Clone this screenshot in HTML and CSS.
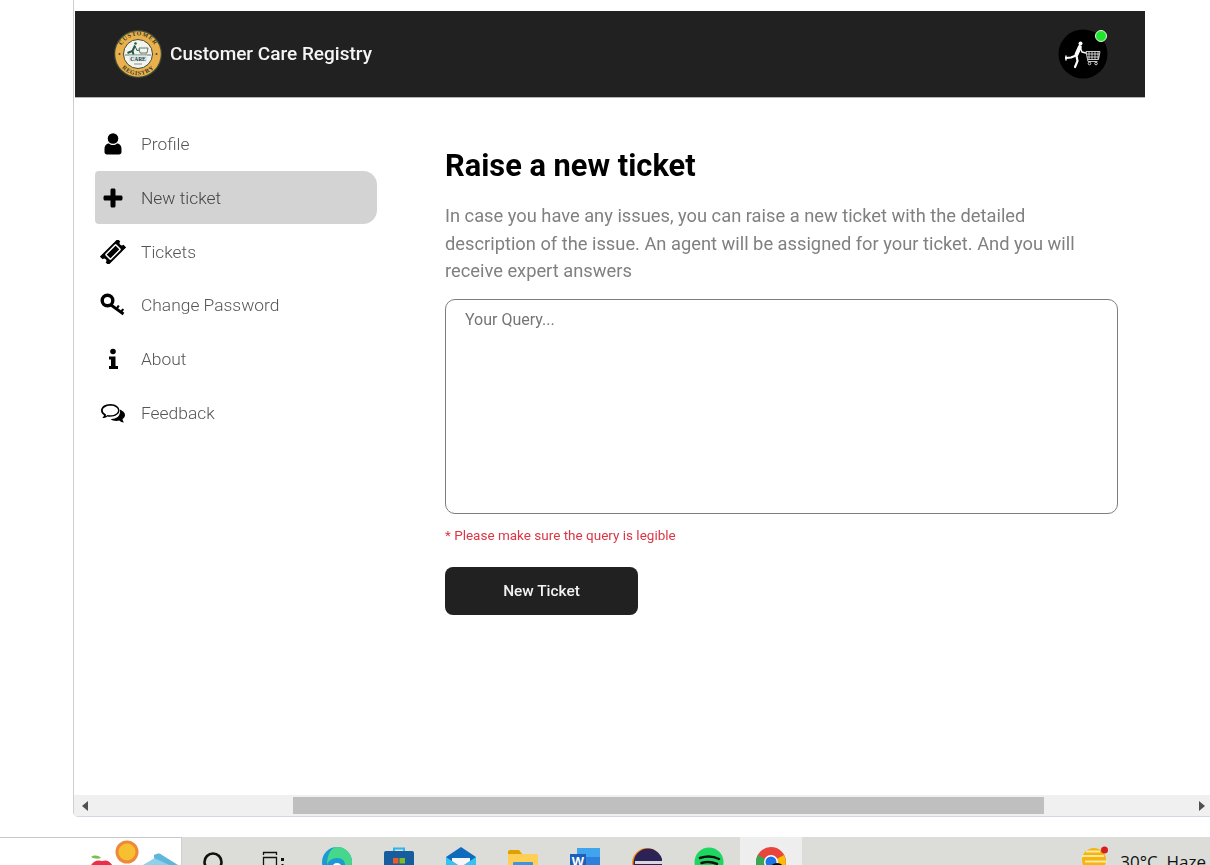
FILE: index.html
```html
<!DOCTYPE html>
<html lang="en">
<head>
<meta charset="utf-8">
<title>Customer Care Registry</title>
<link rel="stylesheet" href="styles.css">
</head>
<body>
<div class="desktop">
  <div class="window">
    <div class="page">
      <header class="topbar">
        <div class="brand">
          <svg class="logo" viewBox="0 0 48 48">
            <defs>
              <path id="arcTop" d="M5.500 24a18.500 18.500 0 0 1 37 0"/>
              <path id="arcBottom" d="M2.800 24a21.200 21.200 0 0 0 42.400 0"/>
            </defs>
            <circle cx="24" cy="24" r="24" fill="#3f4a35"/>
            <circle cx="24" cy="24" r="22.800" fill="#eab04c"/>
            <circle cx="24" cy="24" r="14.500" fill="#f4f4ee" stroke="#3f4a35" stroke-width="1"/>
            <text class="logo-ring"><textPath href="#arcTop" startOffset="50%" text-anchor="middle">CUSTOMER</textPath></text>
            <text class="logo-ring"><textPath href="#arcBottom" startOffset="50%" text-anchor="middle">REGISTRY</textPath></text>
            <circle cx="5.500" cy="24" r="1" fill="#3f4a35"/>
            <circle cx="42.500" cy="24" r="1" fill="#3f4a35"/>
            <path d="M11 25h26" stroke="#3f5a48" stroke-width=".8"/>
            <circle cx="21.500" cy="13.500" r="1.300" fill="#24594a"/>
            <path d="M21 15.500l-2.500 5.500-5 2M18.500 21l1 3.500" fill="none" stroke="#24594a" stroke-width="2"/>
            <path d="M21 16l2 4.500 2.500-.5" fill="none" stroke="#24594a" stroke-width="1"/>
            <path d="M25 18h9l-1 5h-7zM27 24h.6M31.500 24h.6" fill="none" stroke="#4f6f60" stroke-width=".9"/>
            <rect x="15" y="25.500" width="18" height="6" fill="#dbe7e8"/>
            <text class="logo-care" x="24" y="30.600" text-anchor="middle">CARE</text>
            <path d="M20 34h8" stroke="#6b7a70" stroke-width=".8"/>
          </svg>
          <span class="brand-name">Customer Care Registry</span>
        </div>
        <div class="avatar">
          <svg class="avatar-img" viewBox="0 0 48 48">
            <circle cx="24" cy="24" r="24.500" fill="#000"/>
            <g fill="none" stroke="#fff" stroke-linecap="round" stroke-linejoin="round">
              <circle cx="21.500" cy="13.500" r="2" fill="#fff" stroke="none"/>
              <path d="M20.800 17L17.500 24.500" stroke-width="4"/>
              <path d="M17 25.500L12 27.500 7 28" stroke-width="2.200"/>
              <path d="M7 26v4" stroke-width="1.400"/>
              <path d="M17.500 26L18.500 31 16 37" stroke-width="2.200"/>
              <path d="M21 17l2 5 4 1" stroke-width="1.500"/>
            </g>
            <g fill="none" stroke="#ddd" stroke-width=".9">
              <path d="M27 21.500h14l-1.500 8h-11zM30 21.500v8M33 21.500v8M36 21.500v8M39 21.500v8M27.500 24h13M28 27h12"/>
              <path d="M28.500 29.500l.5 2h9.500"/>
              <circle cx="30.500" cy="33.500" r="1.300"/>
              <circle cx="37" cy="33.500" r="1.300"/>
            </g>
          </svg>
          <span class="status-dot"></span>
        </div>
      </header>

      <div class="layout">
        <nav class="sidebar">
          <a class="nav-item">
            <svg class="nav-icon" viewBox="0 0 26 24"><circle cx="13" cy="6.500" r="5.300"/><path d="M4.500 17c0-4 2.500-5.500 4.500-5.500 1.200 1 2.500 1.500 4 1.500s2.800-.5 4-1.500c2 0 4.500 1.500 4.500 5.500v3c0 1.500-1 2.500-2.500 2.500h-12c-1.500 0-2.500-1-2.500-2.500z"/></svg>
            <span>Profile</span>
          </a>
          <a class="nav-item is-active">
            <svg class="nav-icon" viewBox="0 0 26 24"><path d="M10.500 4c0-.8.700-1.500 1.500-1.500h2c.8 0 1.500.7 1.500 1.500v5.500H21c.8 0 1.500.7 1.500 1.500v2c0 .8-.7 1.500-1.500 1.500h-5.500V20c0 .8-.7 1.500-1.500 1.500h-2c-.8 0-1.500-.7-1.500-1.500v-5.500H5c-.8 0-1.500-.7-1.500-1.500v-2c0-.8.700-1.500 1.500-1.500h5.500z"/></svg>
            <span>New ticket</span>
          </a>
          <a class="nav-item">
            <svg class="nav-icon" viewBox="0 0 26 24">
              <g transform="rotate(-45 13 12)">
                <path d="M.5 6h25v3.800a2.200 2.200 0 0 0 0 4.400V18H.5v-3.800a2.200 2.200 0 0 0 0-4.400z"/>
                <rect x="6" y="8.700" width="14" height="6.600" rx=".5" fill="none" stroke="#fff" stroke-width="1.500"/>
              </g>
            </svg>
            <span>Tickets</span>
          </a>
          <a class="nav-item">
            <svg class="nav-icon" viewBox="0 0 26 24">
              <ellipse cx="7.500" cy="7.500" rx="5.300" ry="5.300" fill="none" stroke="#000" stroke-width="3.400"/>
              <path d="M11 12L23.500 21" fill="none" stroke="#000" stroke-width="2.800"/>
              <path d="M16.500 16l2.300-3.500M21 19.200l2.200-3.200" fill="none" stroke="#000" stroke-width="2.200"/>
            </svg>
            <span>Change Password</span>
          </a>
          <a class="nav-item">
            <svg class="nav-icon" viewBox="0 0 26 24"><circle cx="13" cy="4.500" r="2.800"/><path d="M9 9.500h6.500V19H18v3H9v-3h2v-6.500H9z"/></svg>
            <span>About</span>
          </a>
          <a class="nav-item">
            <svg class="nav-icon" viewBox="0 0 26 24"><path fill-rule="evenodd" d="M10.500 3C5 3 1 5.800 1 9.500c0 2 1.200 3.700 3 4.800-.2 1-.8 2-1.700 2.700 2 0 3.700-.6 5-1.600.9.200 1.800.3 2.700.3 5.500 0 9.500-2.800 9.500-6.200S16 3 10.500 3zm0 1.800c4.200 0 7.500 2.100 7.500 4.700s-3.300 4.800-7.500 4.800c-1 0-2-.1-3-.4-.7.500-1.200.9-1.800 1.100.2-.5.300-1 .3-1.600-1.800-1-3.200-2.400-3.200-3.900 0-2.600 3.500-4.700 7.700-4.700z"/><path d="M20 8.500c.5.500 5 2 5 5.500 0 1.700-1 3.100-2.500 4 .1 1.300.7 2.300 1.500 3.500-2 0-3.500-.7-4.700-2-.9.200-1.800.4-2.800.4-2.500 0-4.800-.8-6-2 4 .5 10.500-1.500 9.500-9.400z"/></svg>
            <span>Feedback</span>
          </a>
        </nav>

        <main class="content">
          <h1 class="title">Raise a new ticket</h1>
          <p class="lead">In case you have any issues, you can raise a new ticket with the detailed description of the issue. An agent will be assigned for your ticket. And you will receive expert answers</p>
          <textarea class="query" placeholder="Your Query..."></textarea>
          <p class="note">* Please make sure the query is legible</p>
          <button class="submit" type="button">New Ticket</button>
        </main>
      </div>
    </div>
    <div class="hscroll">
      <svg class="arrow" viewBox="0 0 6 10"><path d="M6 0v10L0 5z"/></svg>
      <div class="track"><div class="thumb"></div></div>
      <svg class="arrow" viewBox="0 0 6 10"><path d="M0 0v10l6-5z"/></svg>
    </div>
  </div>

  <footer class="taskbar">
    <div class="widget">
      <svg class="widget-art" viewBox="0 0 92 28">
        <path d="M50 28L70 16 90 28z" fill="#8fd0ea"/>
        <path d="M66 15c3-2 6-2 8 0l16 10-2 3-22-10z" fill="#5fb6dd"/>
        <path d="M2 28c1-5 6-9 12-7 5-2 10 1 11 7z" fill="#e8304a"/>
        <path d="M3 17c3-2 7-2 10 1-3 1-7 1-10-1z" fill="#7cc04a"/>
        <circle cx="39" cy="12" r="11.500" fill="#f0883a"/>
        <circle cx="39" cy="12" r="8.500" fill="#f6c030"/>
      </svg>
    </div>
    <div class="tray-apps">
      <div class="slot">
        <svg class="app" viewBox="0 0 30 30"><circle cx="15" cy="15" r="8.500" fill="none" stroke="#111" stroke-width="2.600"/></svg>
      </div>
      <div class="slot">
        <svg class="app" viewBox="0 0 30 30"><path d="M3.500 8V5.500h13V8M3.500 30V10.500h13V30" fill="none" stroke="#111" stroke-width="1.300"/><path d="M21 11h3v3h-3zM21.500 17h2v13h-2z" fill="#111"/></svg>
      </div>
      <div class="slot">
        <svg class="app" viewBox="0 0 30 30"><circle cx="15" cy="15" r="15" fill="#1b9ad6"/><path d="M15 0a15 15 0 0 1 15 15c0 6-5 8-9 7 4-4 2-11-6-11-5 0-9 3-10 7C5 8 9 0 15 0z" fill="#46d88a"/><circle cx="15" cy="21" r="5" fill="#fff"/></svg>
      </div>
      <div class="slot">
        <svg class="app" viewBox="0 0 30 30"><path d="M10 4V1.500h10V4" fill="none" stroke="#2fb4ea" stroke-width="2"/><rect y="4" width="30" height="26" rx="2" fill="#155d9c"/><rect x="9" y="11" width="5.500" height="5.500" fill="#f25a24"/><rect x="15.500" y="11" width="5.500" height="5.500" fill="#7fba2a"/></svg>
      </div>
      <div class="slot">
        <svg class="app" viewBox="0 0 30 30"><path d="M0 10L15 0l15 10v20H0z" fill="#0f6cbd"/><path d="M0 10l15 10 15-10v20H0z" fill="#35c3f3"/><path d="M6 11h18v3l-9 6-9-6z" fill="#f4f8fb"/></svg>
      </div>
      <div class="slot">
        <svg class="app" viewBox="0 0 30 30"><path d="M0 5c0-1 .6-2 2-2h9l3 4h14c1.200 0 2 .8 2 2v21H0z" fill="#ffcf55"/><path d="M0 5c0-1 .6-2 2-2h9l3 4H0z" fill="#e0a100"/><rect x="5" y="15" width="20" height="15" rx="1" fill="#3b95dc"/></svg>
      </div>
      <div class="slot">
        <svg class="app" viewBox="0 0 30 30"><rect x="7" y="1" width="23" height="29" rx="1" fill="#2f7fdc"/><rect x="7" y="1" width="23" height="9" fill="#41a5ee"/><rect x="7" y="19" width="23" height="11" fill="#185abd"/><rect y="7" width="16" height="23" fill="#1d5fb8"/><text class="word-w" x="8" y="19" text-anchor="middle">W</text></svg>
      </div>
      <div class="slot">
        <svg class="app" viewBox="0 0 30 30"><circle cx="15" cy="16" r="15" fill="#f7941e"/><circle cx="16" cy="16" r="14.500" fill="#2c2255"/><path d="M3 14h27v3H3zM3 19h27v2.500H3zM4 24h24v2.500H4z" fill="#d9d7e4"/></svg>
      </div>
      <div class="slot">
        <svg class="app" viewBox="0 0 30 30"><circle cx="15" cy="15" r="14.500" fill="#1ed760"/><path d="M6 11c6-2 13-2 19 1M7.500 16c5-1.500 11-1 15.500 1M9 21c4-1 9-.8 12.500 1" fill="none" stroke="#111" stroke-width="2.500" stroke-linecap="round"/></svg>
      </div>
      <div class="slot is-open">
        <svg class="app" viewBox="0 0 30 30"><circle cx="15" cy="15" r="15" fill="#e8453c"/><path d="M15 15L2 23a15 15 0 0 0 13 7z" fill="#34a853"/><path d="M2 8a15 15 0 0 0 0 15l13-8z" fill="#34a853"/><path d="M15 15l13-7a15 15 0 0 1-4 19z" fill="#fbbc05"/><circle cx="15" cy="15" r="7" fill="#fff"/><circle cx="15" cy="15" r="5.500" fill="#1a73e8"/><circle cx="21" cy="24" r="8" fill="#0b0b0b"/></svg>
      </div>
    </div>
    <div class="weather">
      <svg class="weather-icon" viewBox="0 0 28 28"><circle cx="13" cy="14" r="12" fill="#f5b50a"/><path d="M5 5.500h14M1 10h22M4 15.500h22M1 20h20" stroke="#fbe6a8" stroke-width="2.200"/><path d="M8 24h12" stroke="#e8762a" stroke-width="2"/><circle cx="23.500" cy="4" r="3.500" fill="#d42020"/></svg>
      <span class="weather-text">30°C&nbsp; Haze</span>
    </div>
  </footer>
</div>
</body>
</html>
```

FILE: styles.css
```css
* {
  box-sizing: border-box;
}

html,
body {
  margin: 0;
  height: 100%;
  overflow: hidden;
  background: #fff;
}

.desktop {
  width: 1210px;
  height: 865px;
  display: flex;
  flex-direction: column;
  overflow: hidden;
  font-family: Roboto, "Liberation Sans", sans-serif;
}

.window {
  margin-left: 73px;
  height: 817px;
  flex: none;
  display: flex;
  flex-direction: column;
  border-left: 1px solid #cfcfcf;
  border-bottom: 1px solid #d3d7e4;
  border-bottom-left-radius: 5px;
}

.page {
  flex: 1;
  min-height: 0;
  padding-top: 11px;
  padding-left: 1px;
  overflow: hidden;
  filter: blur(.35px);
}

.topbar {
  width: 1070px;
  height: 87px;
  background: #212121;
  border-bottom: 1px solid #b5b5b5;
  display: flex;
  align-items: center;
  justify-content: space-between;
  padding: 0 38px 0 39px;
}

.brand {
  display: flex;
  align-items: center;
  gap: 8px;
}

.logo {
  width: 48px;
  height: 48px;
  display: block;
}

.logo-ring {
  font-family: "Liberation Serif", serif;
  font-size: 6px;
  font-weight: 700;
  letter-spacing: .7px;
  fill: #2f3a28;
}

.logo-care {
  font-family: "Liberation Serif", serif;
  font-size: 5.500px;
  font-weight: 700;
  fill: #24413a;
}

.brand-name {
  color: #f5f5f5;
  font-size: 19px;
  line-height: 20px;
  font-weight: 500;
}

.avatar {
  position: relative;
  width: 48px;
  height: 48px;
}

.avatar-img {
  width: 48px;
  height: 48px;
  display: block;
  overflow: visible;
}

.status-dot {
  position: absolute;
  top: 0;
  right: 0;
  width: 12px;
  height: 12px;
  border-radius: 50%;
  border: 1px solid #e8f5e0;
  background: #1fe62c;
}

.layout {
  display: flex;
  padding: 19px 0 0 20px;
}

.sidebar {
  width: 282px;
  flex: none;
  display: flex;
  flex-direction: column;
  gap: .8px;
  margin-top: .5px;
}

.nav-item {
  height: 53px;
  display: flex;
  align-items: center;
  gap: 15px;
  padding-left: 5px;
  border-radius: 4px 14px 14px 4px;
  color: #555;
  font-size: 17.400px;
  font-weight: 300;
}

.nav-item.is-active {
  background: #d3d3d3;
  color: #444;
}

.nav-icon {
  width: 26px;
  height: 24px;
  flex: none;
  fill: #000;
}

.content {
  width: 673px;
  margin-left: 68px;
  padding-top: 30px;
}

.title {
  margin: 0;
  font-size: 30.800px;
  line-height: 38px;
  font-weight: 700;
  color: #000;
}

.lead {
  margin: 17px 0 0;
  font-size: 18.300px;
  line-height: 27.500px;
  color: #808080;
  width: 650px;
}

.query {
  display: block;
  width: 673px;
  height: 215px;
  margin-top: 14px;
  padding: 10px 19px;
  border: 1px solid #7d7d7d;
  border-radius: 10px;
  resize: none;
  outline: none;
  background: #fff;
  font-family: Roboto, "Liberation Sans", sans-serif;
  font-size: 16px;
  line-height: 20px;
}

.query::placeholder {
  color: #757575;
  opacity: 1;
}

.note {
  margin: 13px 0 0;
  font-size: 13.500px;
  line-height: 17px;
  color: #dc3545;
}

.submit {
  display: block;
  width: 193px;
  height: 48px;
  margin-top: 23px;
  border: 0;
  border-radius: 8px;
  background: #212121;
  color: #f2f2f2;
  font-family: Roboto, "Liberation Sans", sans-serif;
  font-size: 15.400px;
  font-weight: 500;
}

.hscroll {
  height: 21px;
  flex: none;
  background: #f0f0f0;
  display: flex;
  align-items: center;
  padding: 0 5px 0 8px;
}

.arrow {
  width: 6px;
  height: 10px;
  flex: none;
  fill: #505050;
}

.track {
  flex: 1;
  padding-left: 205px;
}

.thumb {
  width: 751px;
  height: 17px;
  background: #bfbfbf;
}

.taskbar {
  margin-top: 20px;
  height: 40px;
  flex: none;
  display: flex;
  overflow: hidden;
  background: #dcddd9;
}

.widget {
  width: 182px;
  flex: none;
  height: 100%;
  background: #fff;
  border-top: 1px solid #c8c8c8;
  border-right: 1px solid #d0d0d0;
  padding: 2px 0 0 88px;
}

.widget-art {
  width: 92px;
  height: 28px;
  display: block;
}

.tray-apps {
  display: flex;
}

.slot {
  width: 62px;
  height: 40px;
  padding-top: 10px;
  display: flex;
  justify-content: center;
}

.slot.is-open {
  background: #eeeeee;
}

.app {
  width: 30px;
  height: 30px;
  flex: none;
  display: block;
}

.word-w {
  font-family: "Liberation Sans", sans-serif;
  font-size: 13px;
  font-weight: 700;
  fill: #fff;
}

.weather {
  margin-left: auto;
  display: flex;
  gap: 11px;
  padding-top: 9px;
  padding-right: 4px;
  white-space: nowrap;
}

.weather-icon {
  width: 28px;
  height: 28px;
  flex: none;
}

.weather-text {
  font-family: "Open Sans", sans-serif;
  font-size: 17px;
  line-height: 22px;
  padding-top: 5px;
  color: #111;
}
```
